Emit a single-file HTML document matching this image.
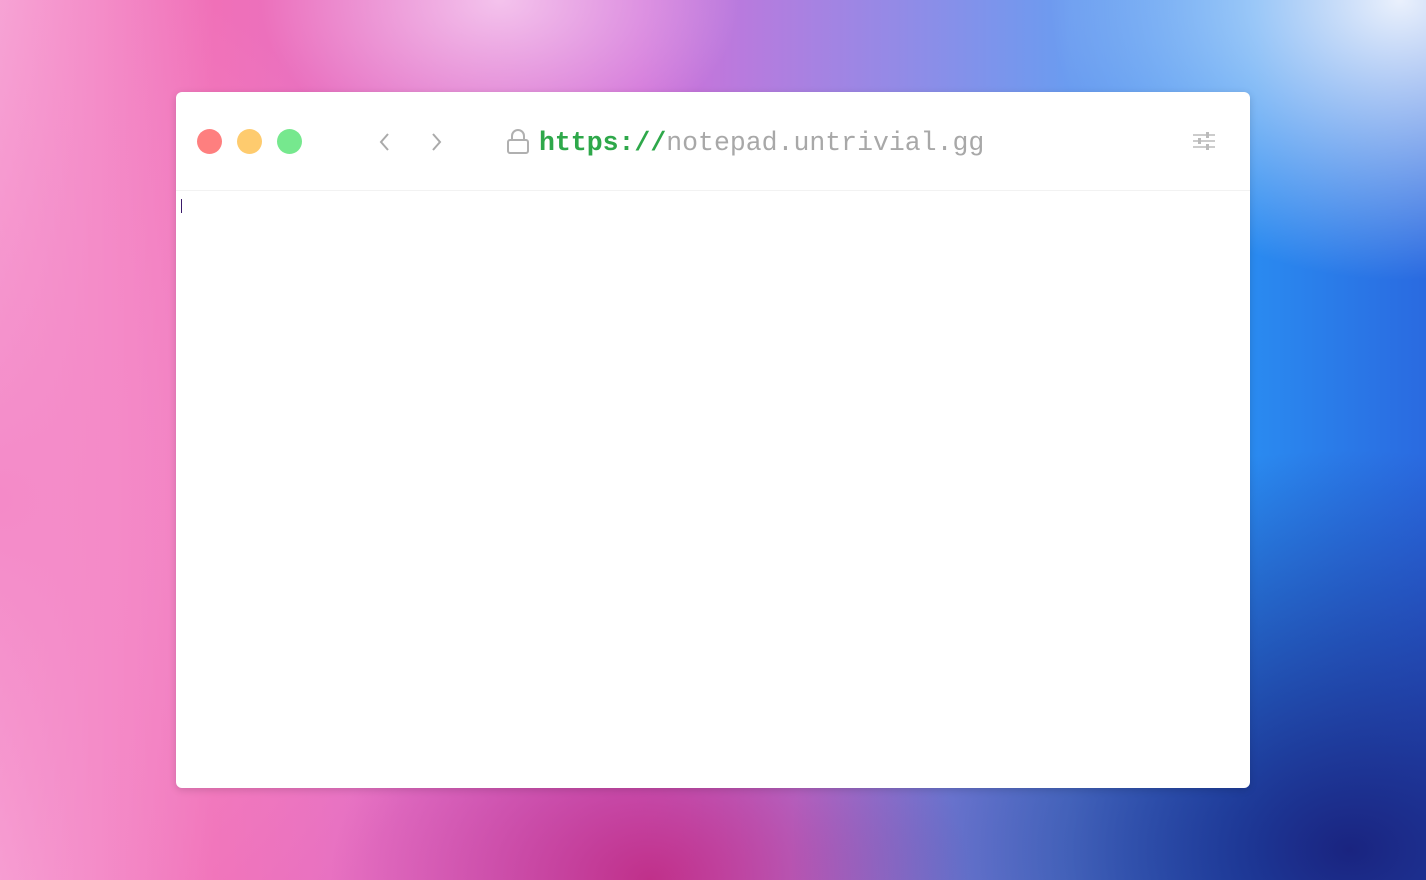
<!DOCTYPE html>
<html><head><style>
html,body{margin:0;padding:0;width:1426px;height:880px;overflow:hidden}
body{position:relative;background:
radial-gradient(ellipse 500px 400px at 1400px 0px,rgba(255,255,255,0.9),rgba(255,255,255,0) 70%),
radial-gradient(ellipse 300px 200px at 500px 0px,rgba(255,230,250,0.7),rgba(255,230,250,0) 80%),
radial-gradient(ellipse 700px 500px at 1350px 850px,#1a2480,rgba(30,40,160,0) 80%),
radial-gradient(ellipse 600px 700px at 0px 500px,#f48ac8,rgba(244,138,200,0) 80%),
radial-gradient(ellipse 400px 300px at 650px 880px,#c0308a,rgba(192,48,138,0) 80%),
linear-gradient(90deg,#f7a6d6 0%,#f070b8 15%,#d070d8 45%,#6a9cf0 75%,#2a8af0 88%,#2a6ae0 100%);}
.win{position:absolute;left:176px;top:92px;width:1074px;height:696px;background:#fff;border-radius:6px;box-shadow:0 2px 8px rgba(0,0,0,0.15)}
.bar{height:98px;border-bottom:1px solid #f2f2f2;position:relative}
.dot{position:absolute;top:37px;width:25px;height:25px;border-radius:50%}
.url{position:absolute;left:363px;top:34px;font-family:"Liberation Mono",monospace;font-size:26.5px;color:#a8a8a8;line-height:34px;white-space:nowrap}
.url b{color:#2ea84a}
.caret{position:absolute;left:5px;top:107px;width:1px;height:14px;background:#3a1a6a}
</style></head><body>
<div class="win">
<div class="bar">
<div class="dot" style="left:21px;background:#fe7f7f"></div>
<div class="dot" style="left:61px;background:#fecb6e"></div>
<div class="dot" style="left:101px;background:#76e88e"></div>
<svg style="position:absolute;left:200px;top:40px" width="18" height="20"><path d="M12 2 L5 10 L12 18" fill="none" stroke="#aaa" stroke-width="2"/></svg>
<svg style="position:absolute;left:251px;top:40px" width="18" height="20"><path d="M6 2 L13 10 L6 18" fill="none" stroke="#aaa" stroke-width="2"/></svg>
<svg style="position:absolute;left:329px;top:36px" width="26" height="28"><path d="M7 12 V8 a6 6 0 0 1 12 0 V12" fill="none" stroke="#b0b0b0" stroke-width="2"/><rect x="3" y="12" width="20" height="13" rx="2" fill="none" stroke="#b0b0b0" stroke-width="2"/></svg>
<div class="url"><b>https://</b>notepad.untrivial.gg</div>
<svg style="position:absolute;left:1016px;top:40px" width="24" height="20"><g stroke="#bbb" stroke-width="1.5"><line x1="1" y1="3" x2="23" y2="3"/><line x1="1" y1="9" x2="23" y2="9"/><line x1="1" y1="15" x2="23" y2="15"/></g><g fill="#bbb"><rect x="14" y="0" width="3" height="6"/><rect x="6" y="6" width="3" height="6"/><rect x="14" y="12" width="3" height="6"/></g></svg>
</div>
<div class="caret"></div>
</div>
</body></html>
